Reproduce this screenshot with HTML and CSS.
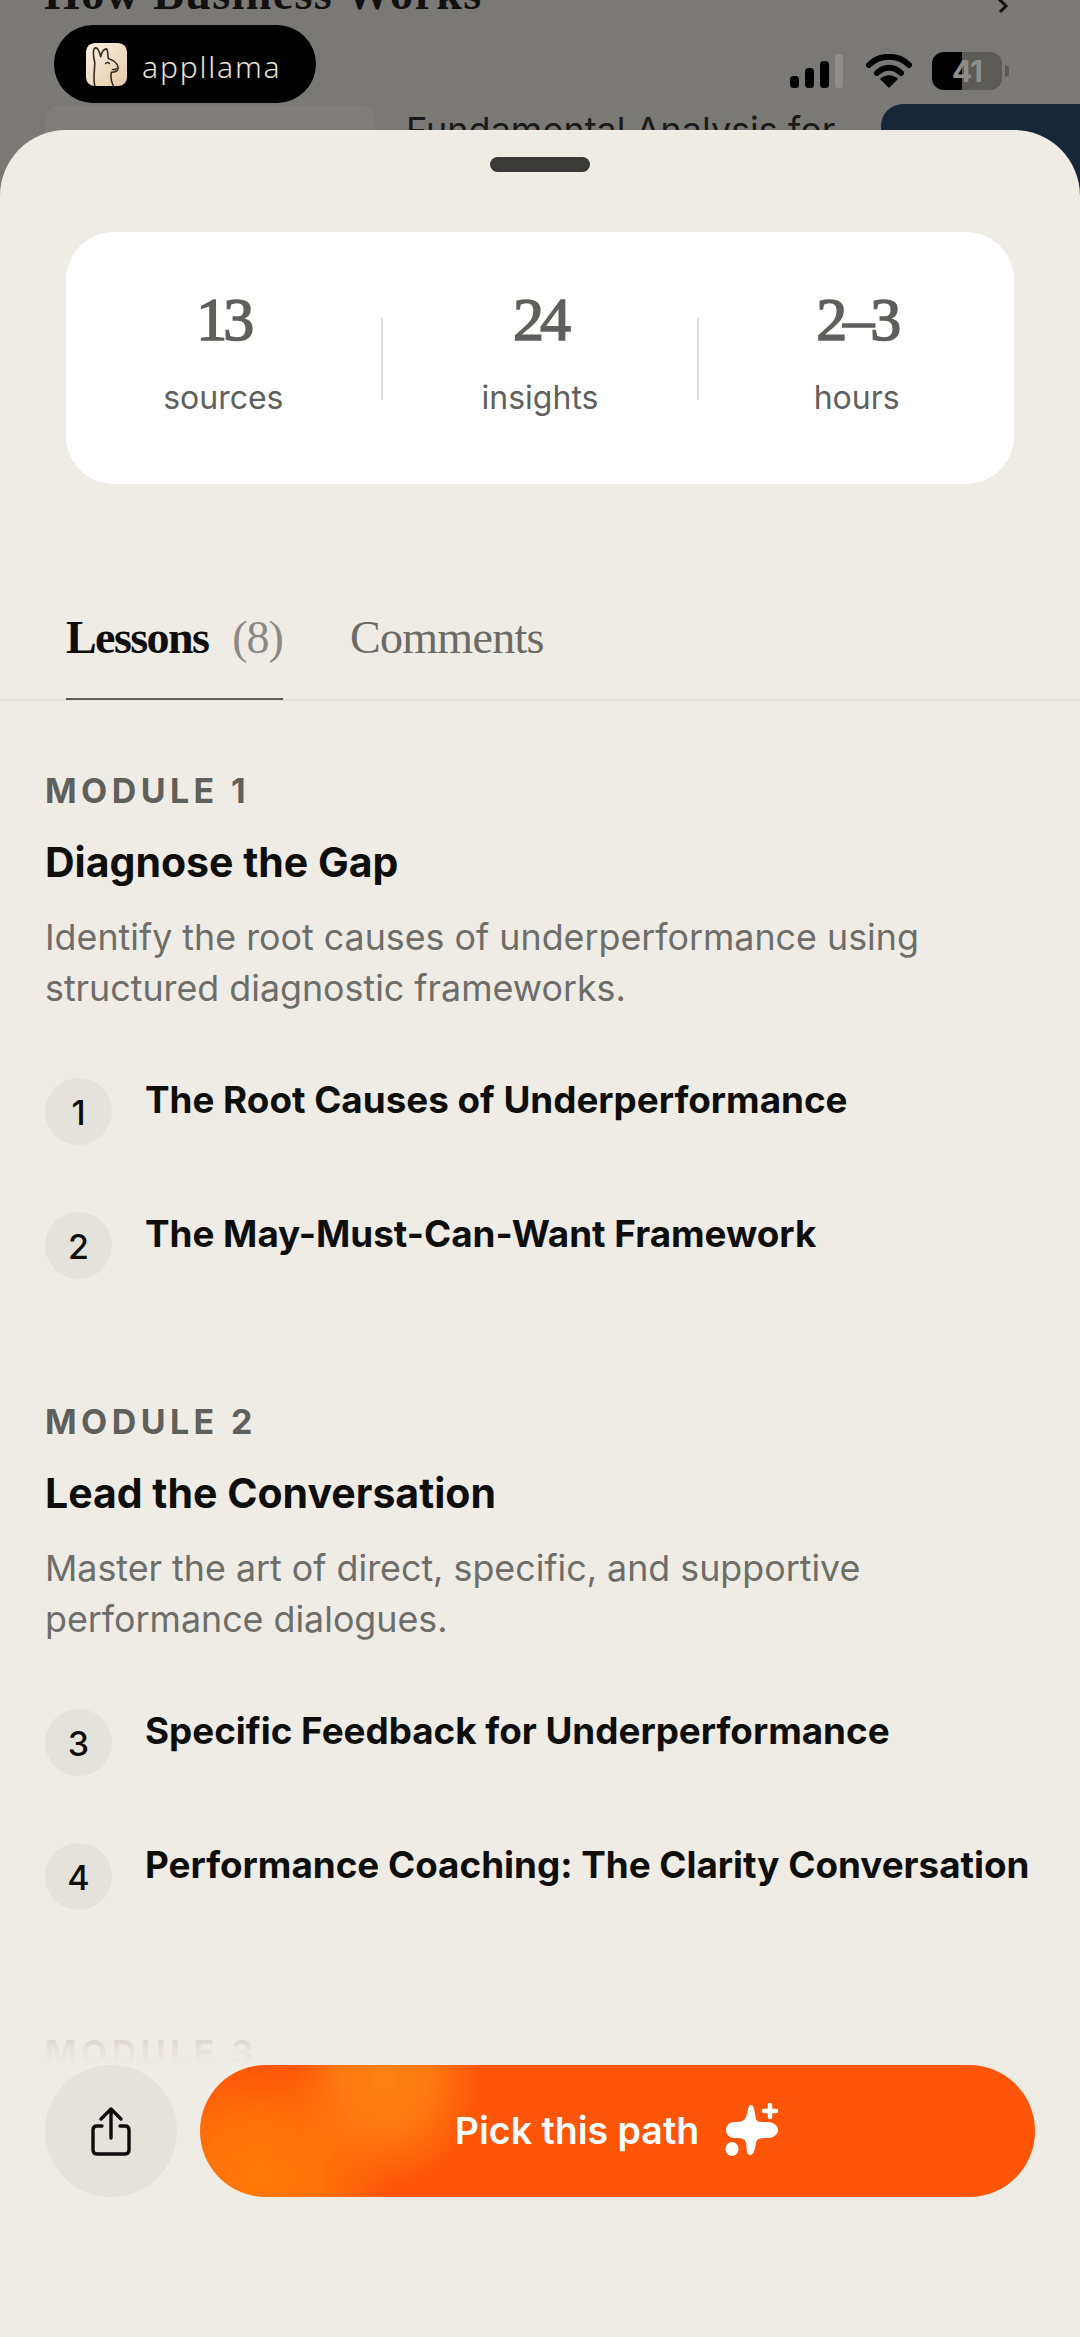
FILE: index.html
```html
<!DOCTYPE html>
<html lang="en">
<head>
<meta charset="utf-8">
<title>Path details</title>
<link rel="stylesheet" href="styles.css">
</head>
<body>
<div class="backdrop">
  <div class="bg-title">How Business Works</div>
  <svg class="bg-chevron" viewBox="0 0 20 20"><path d="M4 -4 L14 6 L8 12" fill="none" stroke="#111" stroke-width="3"/></svg>
  <div class="bg-thumb"></div>
  <div class="bg-text">Fundamental Analysis for</div>
  <div class="bg-navy"></div>
  <div class="logo-pill">
    <svg class="logo-icon" viewBox="0 0 42 44">
      <defs><linearGradient id="lg" x1="0" y1="0" x2="1" y2="1"><stop offset="0" stop-color="#fbf1e2"/><stop offset="1" stop-color="#e6c9a6"/></linearGradient></defs>
      <rect width="42" height="44" rx="9" fill="url(#lg)"/>
      <path d="M9 44 C7 36 9 28 9 20 C7 12 7 5 10 5 C13 5 14 10 15 14 C16 10 18 6 21 6 C23 8 22 13 23 16 C27 17 32 20 33 25 C33 29 29 30 26 30 C25 35 26 40 28 44" fill="none" stroke="#33291f" stroke-width="1.6" stroke-linecap="round" stroke-linejoin="round"/>
      <path d="M20 21 q2 -2 4 0 M27 27 q2 1 4 -1" fill="none" stroke="#33291f" stroke-width="1.4" stroke-linecap="round"/>
    </svg>
    <span class="logo-text">appllama</span>
  </div>
  <div class="status">
    <svg class="signal" viewBox="0 0 54 34">
      <rect x="0" y="22" width="9" height="12" rx="3.5" fill="#000"/>
      <rect x="15" y="14" width="9" height="20" rx="3.5" fill="#000"/>
      <rect x="30" y="7" width="9" height="27" rx="3.5" fill="#000"/>
      <rect x="45" y="0" width="8" height="34" rx="3" fill="#8f8e8a"/>
    </svg>
    <svg class="wifi" viewBox="0 0 46 34">
      <path d="M3 11 C14 0 32 0 43 11" fill="none" stroke="#000" stroke-width="6" stroke-linecap="round"/>
      <path d="M11 19 C18 12 28 12 35 19" fill="none" stroke="#000" stroke-width="6" stroke-linecap="round"/>
      <path d="M14 25 C19 20 27 20 32 25 L23 34 Z" fill="#000"/>
    </svg>
    <div class="battery"><div class="battery-fill"></div><span class="battery-num">41</span></div>
    <div class="battery-tip"></div>
  </div>
</div>

<main class="sheet">
  <div class="handle"></div>
  <section class="stats">
    <div class="stat"><div class="stat-num">13</div><div class="stat-label">sources</div></div>
    <div class="stat-div"></div>
    <div class="stat"><div class="stat-num">24</div><div class="stat-label">insights</div></div>
    <div class="stat-div"></div>
    <div class="stat"><div class="stat-num">2–3</div><div class="stat-label">hours</div></div>
  </section>
  <nav class="tabs">
    <div class="tab tab-active">Lessons<span class="tab-count">(8)</span></div>
    <div class="tab">Comments</div>
  </nav>
  <section class="module">
    <div class="mod-label">MODULE 1</div>
    <h2 class="mod-title">Diagnose the Gap</h2>
    <p class="mod-desc">Identify the root causes of underperformance using structured diagnostic frameworks.</p>
    <div class="lesson"><span class="num">1</span><span class="lesson-title">The Root Causes of Underperformance</span></div>
    <div class="lesson"><span class="num">2</span><span class="lesson-title">The May-Must-Can-Want Framework</span></div>
  </section>
  <section class="module">
    <div class="mod-label">MODULE 2</div>
    <h2 class="mod-title">Lead the Conversation</h2>
    <p class="mod-desc">Master the art of direct, specific, and supportive performance dialogues.</p>
    <div class="lesson"><span class="num">3</span><span class="lesson-title">Specific Feedback for Underperformance</span></div>
    <div class="lesson"><span class="num">4</span><span class="lesson-title">Performance Coaching: The Clarity Conversation</span></div>
  </section>
  <section class="module">
    <div class="mod-label">MODULE 3</div>
  </section>
</main>

<div class="footer">
  <div class="fade"></div>
  <div class="actions">
    <div class="share">
      <svg viewBox="0 0 40 50" class="share-icon">
        <path d="M20 32 V3 M10 13 L20 3 L30 13" fill="none" stroke="#0c0c0c" stroke-width="3.4" stroke-linecap="round" stroke-linejoin="round"/>
        <path d="M11 20 H6 Q2 20 2 24 V44 Q2 48 6 48 H34 Q38 48 38 44 V24 Q38 20 34 20 H29" fill="none" stroke="#0c0c0c" stroke-width="3.4" stroke-linecap="round"/>
      </svg>
    </div>
    <div class="cta">
      <span class="cta-text">Pick this path</span>
      <svg class="spark" viewBox="0 0 56 56">
        <path d="M27 2 C30 2 31 10 32 16 C33 19 35 19 44 19 C50 19 54 23 54 27 C54 31 50 35 44 35 C35 35 33 36 32 40 C31 46 30 52 26 52 C22 52 23 46 22 40 C21 36 19 35 10 35 C5 35 2 31 2 27 C2 23 5 19 10 19 C18 19 20 18 22 14 C24 8 24 2 27 2 Z" fill="#fff"/>
        <ellipse cx="8" cy="46" rx="6.5" ry="7" fill="#fff"/>
        <path d="M46 2 V14 M40 8 H52" stroke="#fff" stroke-width="4.5" stroke-linecap="round"/>
      </svg>
    </div>
  </div>
</div>
</body>
</html>
```

FILE: styles.css
```css
* { box-sizing: border-box; }
html, body { margin: 0; padding: 0; }
body {
  width: 1080px;
  height: 2337px;
  overflow: hidden;
  position: relative;
  background: #efece5;
  font-family: Inter, "Liberation Sans", sans-serif;
}
.backdrop {
  position: absolute;
  left: 0; top: 0;
  width: 1080px;
  height: 200px;
  background: #7a7975;
  overflow: hidden;
}
.bg-title {
  position: absolute;
  left: 44px; top: -28px;
  font: 700 46px/44px "Liberation Serif", serif;
  letter-spacing: 1.4px;
  color: #111;
}
.bg-chevron { position: absolute; left: 992px; top: 0; width: 20px; height: 20px; }
.bg-thumb {
  position: absolute;
  left: 45px; top: 105px;
  width: 330px; height: 100px;
  border-radius: 16px;
  background: #7f7e7a;
}
.bg-text {
  position: absolute;
  left: 406px; top: 108px;
  font: 400 36px/44px Inter, sans-serif;
  color: #1a1a1a;
  white-space: nowrap;
}
.bg-navy {
  position: absolute;
  left: 881px; top: 104px;
  width: 240px; height: 100px;
  border-radius: 22px;
  background: #18263a;
}
.logo-pill {
  position: absolute;
  left: 54px; top: 25px;
  width: 262px; height: 78px;
  border-radius: 39px;
  background: #000;
  display: flex;
  align-items: center;
  gap: 15px;
  padding-left: 32px;
}
.logo-icon { width: 41px; height: 43px; flex: none; }
.logo-text {
  font: 300 30px/36px "Noto Sans", sans-serif;
  color: #e9e2d6;
  letter-spacing: 1.8px;
  padding-top: 6px;
}
.status {
  position: absolute;
  left: 790px; top: 52px;
  display: flex;
  align-items: center;
}
.signal { width: 54px; height: 34px; flex: none; }
.wifi { width: 46px; height: 34px; flex: none; margin-left: 22px; }
.battery {
  position: relative;
  width: 70px; height: 38px;
  margin-left: 20px;
  border-radius: 12px;
  background: #5b5a57;
  overflow: hidden;
  display: flex;
  align-items: center;
  justify-content: center;
  flex: none;
}
.battery-fill { position: absolute; left: 0; top: 0; bottom: 0; width: 30px; background: #000; }
.battery-num {
  position: relative;
  font: 700 30px/38px Inter, sans-serif;
  letter-spacing: -1px;
  color: #8f8e8a;
}
.battery-tip {
  width: 4px; height: 12px;
  margin-left: 3px;
  border-radius: 0 4px 4px 0;
  background: #5b5a57;
  flex: none;
}
.sheet {
  position: absolute;
  left: 0; top: 130px;
  width: 1080px;
  height: 2207px;
  background: #efece5;
  border-radius: 66px 66px 0 0;
  overflow: hidden;
}
.handle {
  width: 100px; height: 15px;
  margin: 27px auto 0;
  border-radius: 8px;
  background: #3a3a38;
}
.stats {
  display: flex;
  align-items: center;
  margin: 60px 66px 0;
  height: 252px;
  background: #fff;
  border-radius: 48px;
  padding: 0 0 16px;
}
.stat { flex: 1; text-align: center; }
.stat-num {
  font: 400 62px/70px "Liberation Serif", serif;
  letter-spacing: -4px;
  color: #5f5f5d;
  -webkit-text-stroke: 1.6px #5f5f5d;
}
.stat-label {
  margin-top: 26px;
  font: 400 32px/36px Inter, sans-serif;
  color: #5f5f5d;
}
.stat-div { width: 2px; height: 82px; background: #deddd9; flex: none; margin-top: 17px; }
.tabs {
  display: flex;
  gap: 67px;
  margin-top: 115px;
  padding: 0 66px;
  height: 102px;
  border-bottom: 2px solid #e3e0d9;
}
.tab {
  font: 400 46px/78px "Liberation Serif", serif;
  letter-spacing: -0.7px;
  color: #6a6a67;
  height: 101px;
}
.tab-active {
  font-weight: 700;
  letter-spacing: -1.6px;
  color: #0e0e0d;
  width: 217px;
  border-bottom: 2px solid #5c5c59;
  white-space: nowrap;
}
.tab-count { font-weight: 400; letter-spacing: -1px; color: #8a8985; margin-left: 24px; }
.module { padding: 0 45px; margin-bottom: 123px; }
.tabs + .module { margin-top: 70px; }
.mod-label {
  font: 700 34px/40px Inter, sans-serif;
  letter-spacing: 4.4px;
  color: #5f5f5c;
}
.mod-title {
  margin: 26px 0 0;
  font: 700 41px/50px Inter, sans-serif;
  color: #0e0e0d;
}
.mod-desc {
  margin: 25px 0 0;
  font: 400 35.8px/51px Inter, sans-serif;
  color: #6d6d6a;
}
.lesson {
  display: flex;
  align-items: flex-start;
  gap: 33px;
  margin-top: 67px;
  height: 67px;
}
.mod-desc + .lesson { margin-top: 64px; }
.num {
  width: 67px; height: 67px;
  border-radius: 50%;
  background: #e4e2da;
  flex: none;
  display: flex;
  align-items: center;
  justify-content: center;
  font: 500 34px/40px Inter, sans-serif;
  color: #0e0e0d;
  padding-top: 2px;
}
.lesson-title {
  font: 700 36.8px/44px Inter, sans-serif;
  color: #0e0e0d;
  white-space: nowrap;
}
.footer {
  position: absolute;
  left: 0; bottom: 0;
  width: 1080px;
  height: 272px;
  background: #efece5;
}
.fade {
  position: absolute;
  left: 0; right: 0; top: -36px;
  height: 36px;
  background: linear-gradient(to bottom, rgba(239,236,229,0.75), rgba(239,236,229,0.92) 50%, #efece5);
}
.actions {
  display: flex;
  gap: 23px;
  padding: 0 45px;
}
.share {
  width: 132px; height: 132px;
  border-radius: 50%;
  background: #e4e2da;
  flex: none;
  display: flex;
  align-items: center;
  justify-content: center;
}
.share-icon { width: 40px; height: 50px; }
.cta {
  flex: 1;
  height: 132px;
  border-radius: 66px;
  background:
    radial-gradient(ellipse 95px 105px at 185px 15px, #fd8313 0%, rgba(253,131,19,0.75) 50%, rgba(253,131,19,0) 100%),
    radial-gradient(ellipse 130px 110px at 60px 110px, #ff7a0a 0%, rgba(255,122,10,0.7) 55%, rgba(255,122,10,0) 100%),
    #fe5508;
  display: flex;
  align-items: center;
  justify-content: center;
  gap: 25px;
}
.cta-text {
  font: 600 37.5px/44px Inter, sans-serif;
  color: #fff;
}
.spark { width: 56px; height: 56px; flex: none; }
```
